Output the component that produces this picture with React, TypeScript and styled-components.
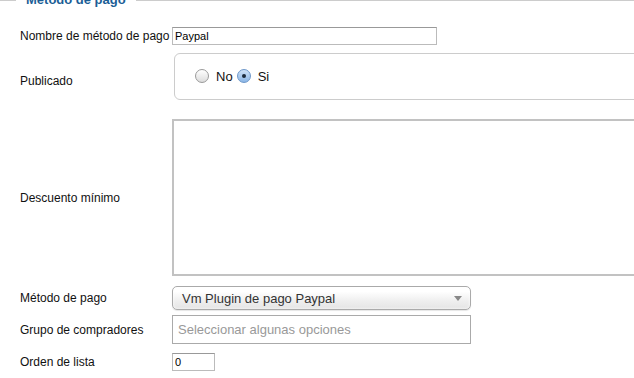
import { createGlobalStyle, styled } from "styled-components";

const GlobalStyle = createGlobalStyle`
    html, body {
        margin: 0;
        padding: 0;
        background: #fff;
        overflow: hidden;
    }
    body {
        font-family: "Liberation Sans", Arial, sans-serif;
        font-size: 12px;
        color: #111;
    }
`;

const Page = styled.div`
    width: 634px;
    overflow: hidden;
`;

const Fieldset = styled.fieldset`
    margin: -7px 0 0 0;
    padding: 0 0 0 20px;
    border: none;
    border-top: 1px solid #ccc;
    width: 700px;
`;

const Legend = styled.legend`
    margin-left: -4px;
    padding: 0 10px;
    font-size: 13px;
    font-weight: bold;
    color: #1b5e96;
    line-height: 14px;
`;

const Row = styled.div<{ $top: number; $labelShift?: number }>`
    display: grid;
    grid-template-columns: 152px 1fr;
    align-items: center;
    margin-top: ${(p) => p.$top}px;

    & > label {
        position: relative;
        top: ${(p) => p.$labelShift ?? 0}px;
    }
`;

const Label = styled.label`
    font-size: 12px;
    color: #111;
`;

const TextInput = styled.input<{ $width: number }>`
    box-sizing: border-box;
    width: ${(p) => p.$width}px;
    height: 18px;
    margin: 0;
    padding: 1px 2px;
    border: 1px solid #bbb;
    border-top-color: #999;
    font-family: "Liberation Sans", Arial, sans-serif;
    font-size: 11px;
    color: #000;
    outline: none;
`;

const RadioGroup = styled.div`
    box-sizing: border-box;
    margin-left: 2px;
    width: 520px;
    height: 47px;
    border: 1px solid #ccc;
    border-radius: 6px;
    display: flex;
    align-items: center;
    gap: 4px;
    padding: 0 0 1px 20px;
`;

const RadioOption = styled.span`
    display: inline-flex;
    align-items: center;
    gap: 7px;
    font-size: 13px;
    color: #111;
`;

const RadioDot = styled.span<{ $checked?: boolean }>`
    box-sizing: border-box;
    width: 14px;
    height: 14px;
    border-radius: 50%;
    display: inline-flex;
    align-items: center;
    justify-content: center;
    border: 1px solid ${(p) => (p.$checked ? "#6d97c9" : "#9a9a9a")};
    background: ${(p) =>
        p.$checked
            ? "linear-gradient(#cfe2f7, #8bb6e6)"
            : "linear-gradient(#ffffff, #dcdcdc)"};

    &::after {
        content: "";
        display: ${(p) => (p.$checked ? "block" : "none")};
        width: 4px;
        height: 4px;
        border-radius: 50%;
        background: #1c2a3a;
    }
`;

const TextArea = styled.textarea`
    box-sizing: border-box;
    width: 520px;
    height: 157px;
    margin: 0;
    border: 2px solid #c2c2c2;
    border-width: 2px 1px 2px 2px;
    resize: none;
    outline: none;
`;

const SelectBox = styled.div`
    box-sizing: border-box;
    width: 299px;
    height: 24px;
    border: 1px solid #aaa;
    border-radius: 5px;
    background: linear-gradient(#ffffff 20%, #f0f0f0 60%, #e4e4e4);
    box-shadow: 0 0 3px #fff inset, 0 1px 1px rgba(0, 0, 0, 0.1);
    display: flex;
    align-items: center;
    justify-content: space-between;
    padding: 0 8px 0 9px;
    font-size: 13px;
    color: #333;
`;

const Arrow = styled.span`
    width: 0;
    height: 0;
    border-left: 4px solid transparent;
    border-right: 4px solid transparent;
    border-top: 5px solid #888;
`;

const ChosenBox = styled.div`
    box-sizing: border-box;
    width: 299px;
    height: 29px;
    border: 1px solid #aaa;
    background: #fff;
    display: flex;
    align-items: center;
    padding-left: 5px;
    font-size: 13px;
    color: #999;
`;

export default function App() {
    return (
        <Page>
            <GlobalStyle />
            <Fieldset>
                <Legend>Método de pago</Legend>
                <Row $top={20}>
                    <Label>Nombre de método de pago</Label>
                    <TextInput $width={265} defaultValue="Paypal" />
                </Row>
                <Row $top={8} $labelShift={4}>
                    <Label>Publicado</Label>
                    <RadioGroup>
                        <RadioOption>
                            <RadioDot />
                            No
                        </RadioOption>
                        <RadioOption>
                            <RadioDot $checked />
                            Si
                        </RadioOption>
                    </RadioGroup>
                </Row>
                <Row $top={19}>
                    <Label>Descuento mínimo</Label>
                    <TextArea />
                </Row>
                <Row $top={10}>
                    <Label>Método de pago</Label>
                    <SelectBox>
                        Vm Plugin de pago Paypal
                        <Arrow />
                    </SelectBox>
                </Row>
                <Row $top={5}>
                    <Label>Grupo de compradores</Label>
                    <ChosenBox>Seleccionar algunas opciones</ChosenBox>
                </Row>
                <Row $top={9}>
                    <Label>Orden de lista</Label>
                    <TextInput $width={43} defaultValue="0" />
                </Row>
            </Fieldset>
        </Page>
    );
}
